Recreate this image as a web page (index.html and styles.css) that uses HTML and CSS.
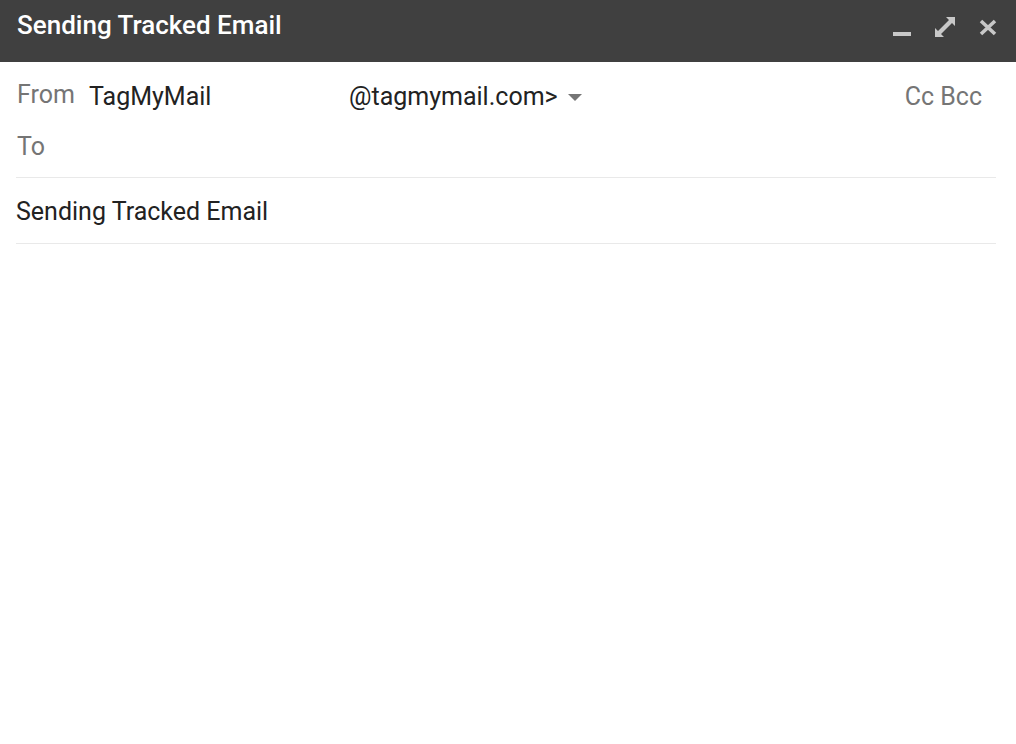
FILE: index.html
```html
<!DOCTYPE html>
<html>
<head>
<meta charset="utf-8">
<link rel="stylesheet" href="styles.css">
</head>
<body>
<div class="compose">
  <div class="titlebar">
    <div class="title">Sending Tracked Email</div>
    <div class="controls">
      <svg class="icon" width="22" height="22" viewBox="0 0 22 22"><rect x="2" y="16" width="18" height="4" fill="#c8c8c8"/></svg>
      <svg class="icon" width="22" height="22" viewBox="0 0 22 22"><polygon points="12,1 21,1 21,10 18,7 7,18 10,21 1,21 1,12 4,15 15,4" fill="#c8c8c8"/></svg>
      <svg class="icon" width="22" height="22" viewBox="0 0 22 22"><path d="M4 5 L18 18 M18 5 L4 18" stroke="#c8c8c8" stroke-width="3.6"/></svg>
    </div>
  </div>
  <div class="fields">
    <div class="row from-row">
      <span class="label from-label">From</span>
      <span class="sender">TagMyMail</span>
      <span class="addr">@tagmymail.com&gt;</span>
      <svg class="caret" width="14" height="8" viewBox="0 0 14 8"><polygon points="0,0 14,0 7,7" fill="#757575"/></svg>
      <span class="spacer"></span>
      <span class="cc">Cc Bcc</span>
    </div>
    <div class="row to-row">
      <span class="label">To</span>
    </div>
    <div class="row subject-row">
      <span class="subject">Sending Tracked Email</span>
    </div>
  </div>
</div>
</body>
</html>
```
FILE: styles.css
```css
html, body {
  margin: 0;
  padding: 0;
  background: #fff;
}
body {
  font-family: Roboto, "Liberation Sans", sans-serif;
  width: 1016px;
  height: 744px;
  overflow: hidden;
}
.titlebar {
  height: 62px;
  background: #404040;
  display: flex;
  align-items: flex-start;
  padding: 10px 17px 0 17px;
  box-sizing: border-box;
}
.title {
  color: #fff;
  font-size: 26px;
  font-weight: 500;
  line-height: 30px;
  flex: 1;
}
.controls {
  display: flex;
  gap: 21px;
  margin-top: 6px;
}
.icon {
  display: block;
}
.fields {
  padding: 0 20px 0 16px;
}
.row {
  display: flex;
  align-items: flex-start;
  font-size: 25px;
  line-height: 29px;
}
.from-row {
  margin-top: 18px;
}
.label {
  color: #757575;
  padding-left: 1px;
}
.from-label {
  width: 72px;
}
.sender {
  color: #222;
  width: 260px;
  margin-top: 2px;
}
.addr {
  color: #222;
  margin-top: 2px;
}
.caret {
  margin-left: 10px;
  margin-top: 14px;
}
.spacer {
  flex: 1;
}
.cc {
  color: #757575;
  margin-right: 14px;
  margin-top: 2px;
}
.to-row {
  margin-top: 21px;
  padding-bottom: 16px;
  border-bottom: 1px solid #e9e9e9;
}
.subject-row {
  padding: 19px 0 17px;
  border-bottom: 1px solid #e9e9e9;
}
.subject {
  color: #222;
}
```
